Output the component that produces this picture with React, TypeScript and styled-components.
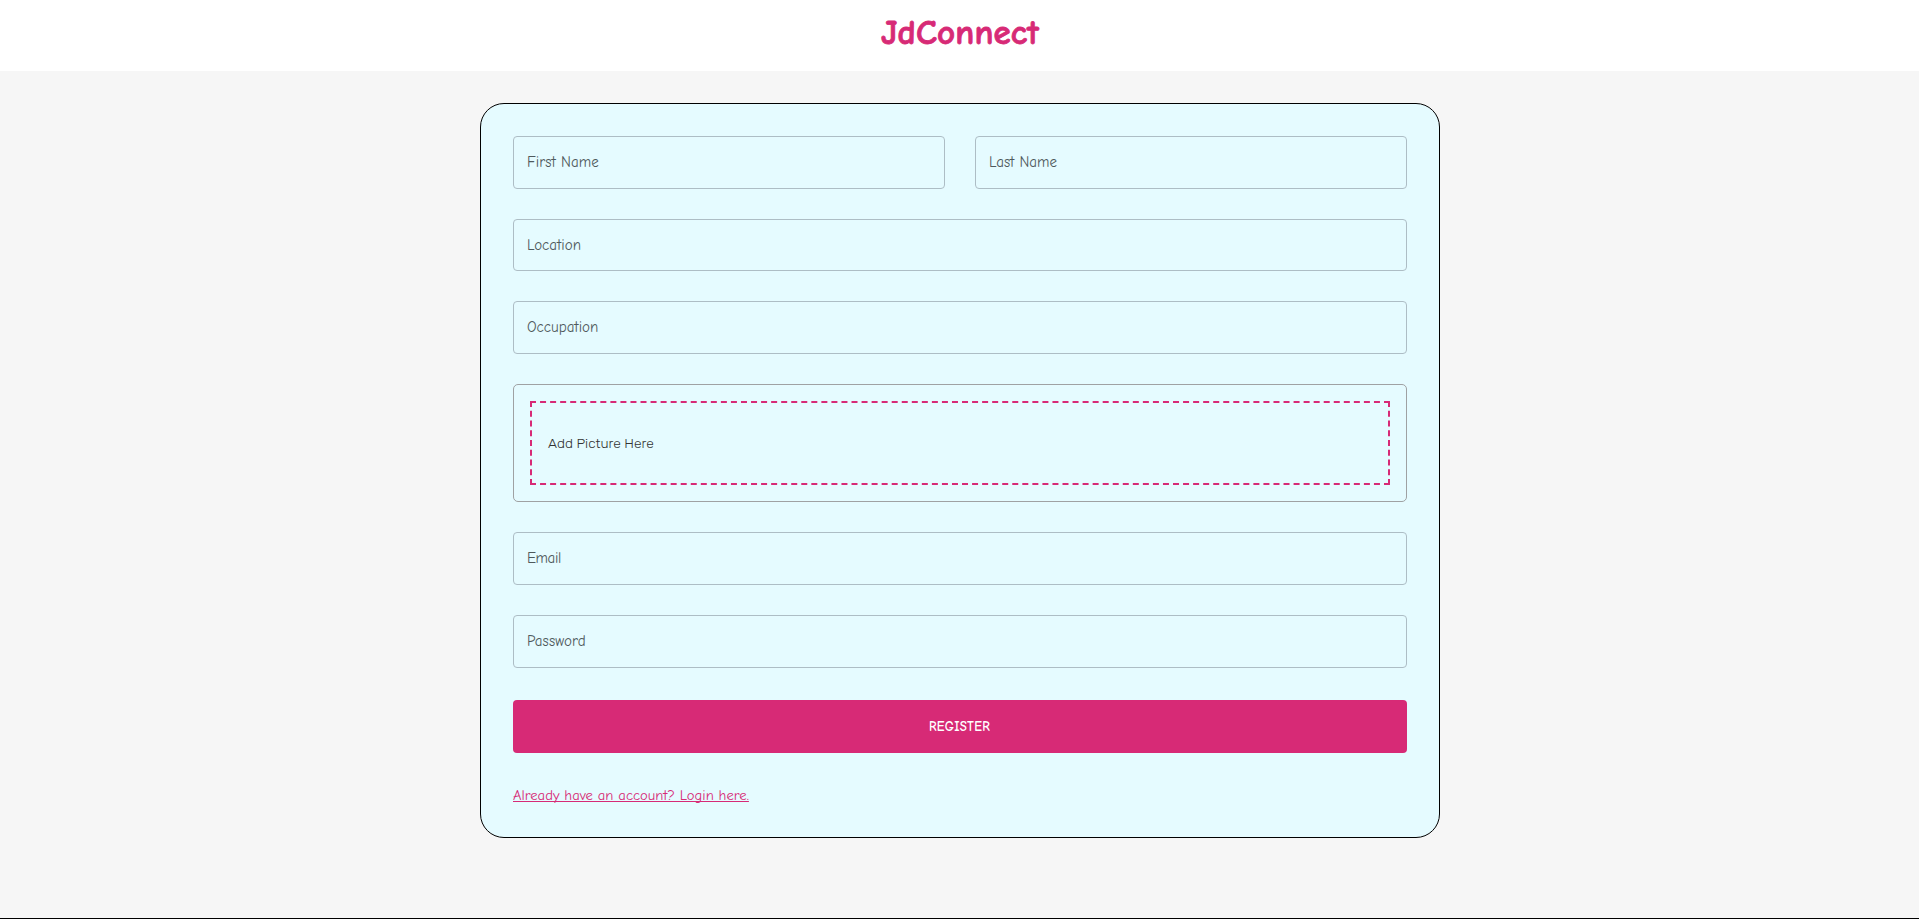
import React from "react";
import styled, { createGlobalStyle } from "styled-components";

const pink = "#d72a76";
const handwriting = `"Comic Sans MS", "Comic Neue", Lato, sans-serif`;

const GlobalStyle = createGlobalStyle`
  *, *::before, *::after { box-sizing: border-box; }
  body { margin: 0; background: #f6f6f6; font-family: ${handwriting}; }
`;

const Page = styled.div`
  display: flex;
  flex-direction: column;
  align-items: center;
  height: 919px;
  overflow: hidden;
  border-bottom: 1px solid #000;
`;

const Header = styled.header`
  width: 100%;
  height: 71px;
  flex: none;
  padding-top: 10px;
  background: #fff;
  text-align: center;
`;

const Brand = styled.h1`
  margin: 0;
  padding-left: 1px;
  color: ${pink};
  font-size: 35px;
  line-height: 46px;
  font-weight: 700;
  letter-spacing: 0.1px;
  -webkit-text-stroke: 0.8px ${pink};
`;

const Card = styled.main`
  width: 960px;
  height: 735px;
  flex: none;
  margin-top: 32px;
  padding: 32px;
  border: 1px solid #000;
  border-radius: 24px;
  background: #e5fbff;
`;

const Form = styled.form`
  display: grid;
  grid-template-columns: 1fr 1fr;
  gap: 30px;
`;

const Input = styled.input<{ $half?: boolean; $spacing: number }>`
  grid-column: ${(p) => (p.$half ? "auto" : "1 / -1")};
  min-width: 0;
  height: 52.6px;
  padding: 0 13.4px;
  border: 1px solid #adbdc5;
  border-radius: 4px;
  outline: none;
  background: transparent;
  font: 400 15px ${handwriting};
  letter-spacing: ${(p) => p.$spacing}px;
  &::placeholder { color: #4f595c; opacity: 1; }
  &[type="email"] { padding-bottom: 1px; }
`;

const Upload = styled.div`
  grid-column: 1 / -1;
  height: 118.6px;
  padding: 16px;
  border: 1px solid #9fa1a3;
  border-radius: 5px;
`;

const DropZone = styled.div`
  display: flex;
  align-items: center;
  height: 100%;
  padding: 0 16.5px 1px;
  border: 2px dashed ${pink};
  color: #333;
  font: 350 13.8px Rubik, Roboto, sans-serif;
`;

const Submit = styled.button`
  grid-column: 1 / -1;
  height: 53px;
  margin-top: 2.4px;
  border: 0;
  border-radius: 4px;
  background: ${pink};
  color: #fff;
  font: 700 13px ${handwriting};
  letter-spacing: 0.25px;
`;

const LoginLink = styled.a`
  display: inline-block;
  margin: 33px 0 0 0.5px;
  color: ${pink};
  font-size: 14.65px;
  line-height: 20px;
  text-decoration: underline;
  text-underline-offset: 1px;
  text-decoration-skip-ink: none;
`;

export default function App() {
  return (
    <Page>
      <GlobalStyle />
      <Header><Brand>JdConnect</Brand></Header>
      <Card>
        <Form>
          <Input $half placeholder="First Name" $spacing={0.1} />
          <Input $half placeholder="Last Name" $spacing={0} />
          <Input placeholder="Location" $spacing={0} />
          <Input placeholder="Occupation" $spacing={0} />
          <Upload><DropZone>Add Picture Here</DropZone></Upload>
          <Input type="email" placeholder="Email" $spacing={-0.4} />
          <Input type="password" placeholder="Password" $spacing={0.1} />
          <Submit type="button">REGISTER</Submit>
        </Form>
        <LoginLink href="#">Already have an account? Login here.</LoginLink>
      </Card>
    </Page>
  );
}
